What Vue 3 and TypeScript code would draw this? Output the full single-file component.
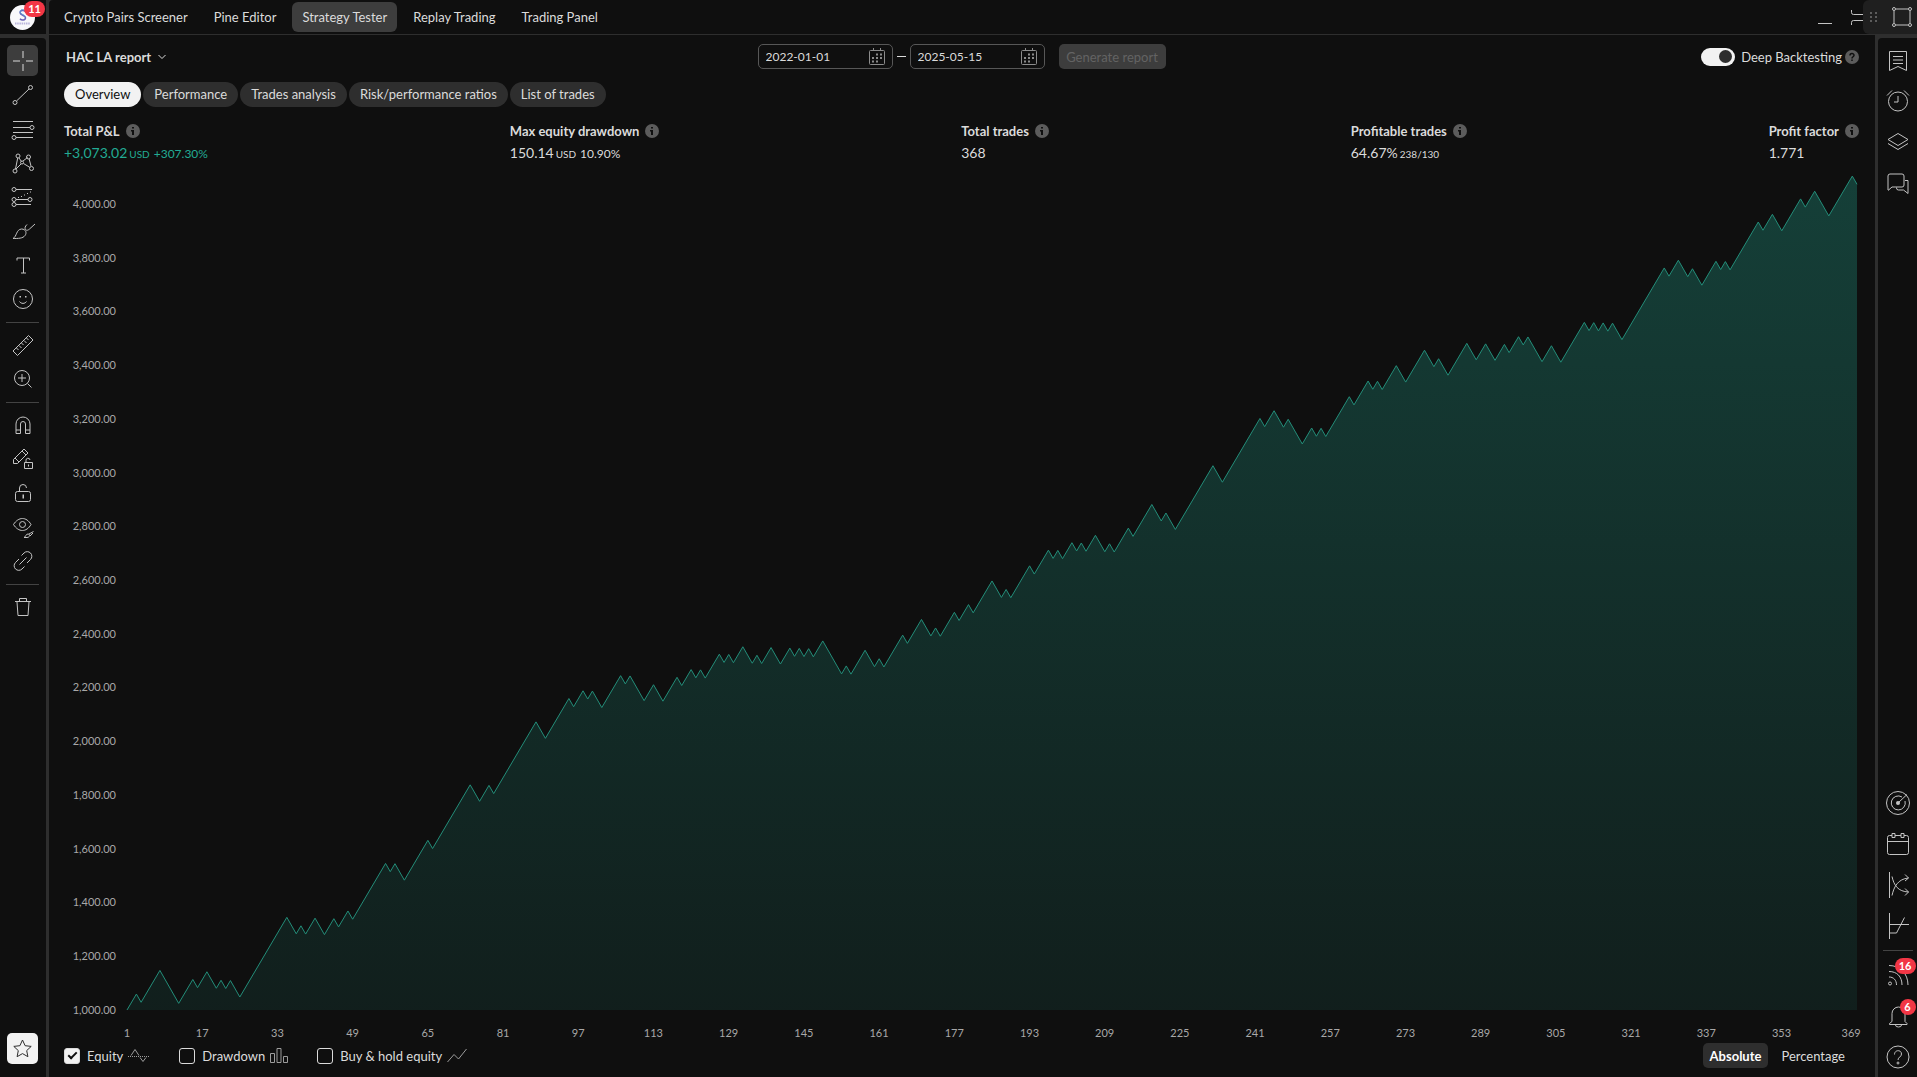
<script setup lang="ts">
import { ref } from 'vue'

interface Icon {
  name: string
  paths: string
  dots?: [number, number, number][]
  fills?: string
  badge?: string
}

const panelTabs = ['Crypto Pairs Screener', 'Pine Editor', 'Strategy Tester', 'Replay Trading', 'Trading Panel']
const activePanel = ref('Strategy Tester')

const reportTabs = ['Overview', 'Performance', 'Trades analysis', 'Risk/performance ratios', 'List of trades']
const activeReport = ref('Overview')

const dateFrom = ref('2022-01-01')
const dateTo = ref('2025-05-15')
const deepBacktesting = ref(true)
const showEquity = ref(true)
const showDrawdown = ref(false)
const showHold = ref(false)
const scale = ref('Absolute')

const stats = [
  { label: 'Total P&L', value: '+3,073.02', unit: 'USD', extra: '+307.30%', gain: true },
  { label: 'Max equity drawdown', value: '150.14', unit: 'USD', extra: '10.90%', gain: false },
  { label: 'Total trades', value: '368', unit: '', extra: '', gain: false },
  { label: 'Profitable trades', value: '64.67%', unit: '238/130', extra: '', gain: false },
  { label: 'Profit factor', value: '1.771', unit: '', extra: '', gain: false },
]

// Trade numbers at which a winning streak turns into a losing one and back.
const turns = [
  2, 3, 7, 11, 14, 15, 17, 19, 20, 21, 22, 24, 34, 36, 37, 38, 40, 42, 44, 45, 47, 48, 55, 56, 57, 59, 64, 65,
  73, 75, 77, 78, 87, 89, 94, 95, 97, 98, 99, 101, 105, 106, 107, 110, 112, 114, 117, 118, 120, 121, 122, 123,
  126, 127, 128, 129, 131, 133, 134, 135, 137, 139, 141, 142, 143, 144, 145, 146, 148, 152, 153, 154, 157, 159,
  160, 161, 165, 166, 169, 171, 172, 173, 176, 177, 179, 180, 184, 186, 187, 188, 192, 193, 196, 197, 198, 199,
  201, 202, 203, 204, 206, 208, 209, 210, 213, 214, 218, 220, 221, 223, 231, 233, 241, 242, 244, 246, 247, 250,
  252, 253, 254, 255, 260, 261, 264, 265, 266, 267, 270, 272, 276, 278, 279, 281, 285, 287, 289, 291, 293, 294,
  296, 297, 298, 301, 303, 305, 310, 311, 312, 313, 314, 315, 316, 318, 327, 328, 330, 332, 333, 335, 338, 339,
  340, 341, 347, 348, 350, 352, 356, 357, 359, 362, 367, 368,
]
const averageWin = 29.66
const averageLoss = 30.66

const points: string[] = ['0,3000']
let equity = 1000
let last = 0
turns.forEach((turn, i) => {
  equity += (turn - last) * (i % 2 === 0 ? averageWin : -averageLoss)
  last = turn
  points.push(`${turn},${(4000 - equity).toFixed(1)}`)
})
const linePoints = points.join(' ')
const areaPoints = `${linePoints} 368,3000`

const yLabels = Array.from({ length: 16 }, (_, i) => (4000 - i * 200).toLocaleString('en-US') + '.00')
const xLabels = Array.from({ length: 24 }, (_, i) => 1 + i * 16)

const drawTools: Icon[][] = [
  [
    { name: 'Cross', paths: 'M14 4v7M14 17v7M4 14h7M17 14h7' },
    { name: 'Trend line', paths: 'M7.5 20 20 8', dots: [[6, 21.5, 2], [21.5, 6.5, 2]] },
    { name: 'Fib retracement', paths: 'M4 6.5h20M4 12.5h17M4 17.5h20M7 22.5h17', dots: [[23, 12.5, 2], [5, 22.5, 2]] },
    { name: 'Patterns', paths: 'M6.5 20 8.7 9M10 9l2.5 3.5M14 12l4.5-3.5M20 9.500l2 7.500M14.500 14.500l6.500 4M12 15l-5 5', dots: [[9, 7, 2], [19.5, 8, 2], [13, 13.500, 1.500], [6, 22, 2], [22.500, 19.500, 2]] },
    { name: 'Forecasting', paths: 'M7 6.5h16M7 16.500h12M7 21.500h15M9 14.500h1M12 13.500h1M15 12h1M18 10.500h1M21 9h1', dots: [[5, 6.5, 2], [5, 16.500, 2], [21, 16.500, 2], [5, 21.500, 2]] },
    { name: 'Brush', paths: 'M4 21.500c4-2 3-9 8.500-9.500 4.500 0 5.500 4 3.500 6.500-2 3-7 3-12 3ZM18 7.500c-2 2-2.500 3.500-1.500 5s3 .5 4-.5L26 7' },
    { name: 'Text', paths: 'M8 9.500v-2.500h12.500v2.500M14.500 7v15M12 22h5' },
    { name: 'Icons', paths: 'M10.500 16.500c1.500 2.500 5.500 2.500 7 0', dots: [[14, 14, 9.5]], fills: 'M10.500 11h1.500v1.500h-1.500zM16 11h1.500v1.500h-1.500z' },
  ],
  [
    { name: 'Measure', paths: 'M4 20 19.500 4.500 24 9 8.500 24.500ZM7.500 17l2 2M10 14.500l2.500 2.500M12.500 12l2 2M15 9.500l2.500 2.500M17.500 7l2 2' },
    { name: 'Zoom in', paths: 'M18.500 18.500l4 4M9 13h8M13 9v8', dots: [[13, 13, 7.5]] },
  ],
  [
    { name: 'Magnet', paths: 'M7 22.500V13a7 7 0 0 1 14 0v9.500h-4.500V13a2.500 2.500 0 0 0-5 0v9.500ZM7 19h4.500M16.500 19H21' },
    { name: 'Stay in drawing mode', paths: 'M4.500 18.500v-4L15 4l4 4L8.500 18.500ZM13 6l4 4M6 13l4 4M15.500 17.500h8v6h-8ZM17 17.500v-2a2 2 0 0 1 4-.5', fills: 'M19 19.500h1v2h-1z' },
    { name: 'Lock drawings', paths: 'M8.500 12.500h11a2 2 0 0 1 2 2v6a2 2 0 0 1-2 2h-11a2 2 0 0 1-2-2v-6a2 2 0 0 1 2-2ZM10.500 12V9a3.500 3.500 0 0 1 7 0', fills: 'M13.500 15.500h1.500v4h-1.500z' },
    { name: 'Hide drawings', paths: 'M4.500 11.500c5-8 13-8 17.500 0-4.500 8-12.500 8-17.500 0ZM15 24.500c2-.5 1.500-3.500 4-3.500s2 3.500-1 3.500ZM20 21l4.500-2.500M21 23l3-3', dots: [[13.500, 11.500, 3]] },
    { name: 'Link', paths: 'M12.500 8.500l2.500-2.500a4.500 4.500 0 0 1 6.500 6.500L18 16M15.500 19.500 13 22a4.500 4.500 0 0 1-6.500-6.500L10 12M10.500 17.500l7-7' },
  ],
  [{ name: 'Remove', paths: 'M6 8.500h16M10.500 8V5.500h7V8M8 9l1 13.500h10L20 9' }],
]

const widgetsTop: Icon[] = [
  { name: 'Watchlist', paths: 'M5.500 4.500h17v19l-8.500-4-8.500 4ZM9 9.500h10M9 13h10M9 16.500h10' },
  { name: 'Alerts', paths: 'M14 8v6h-4M3 7.500 8 2.500M20 2.500l5 5', dots: [[14, 13.500, 9.5]] },
  { name: 'Object tree', paths: 'M14 4.500 24 10.500 14 16.500 4 10.500ZM4 14.500l10 6 10-6' },
  { name: 'Chats', paths: 'M4 20V6a2 2 0 0 1 2-2h12a2 2 0 0 1 2 2v9a2 2 0 0 1-2 2H8l-4 3.500M12.500 17.500V18a2 2 0 0 0 2 2h5l4.500 3.500V10.500h-3' },
]
const widgetsMiddle: Icon[] = [
  { name: 'Screeners', paths: 'M14 14 23 5.500M18 8a7 7 0 1 0 3 4', dots: [[14, 14, 11.5]], fills: 'M12 14a2 2 0 1 0 4 0 2 2 0 1 0-4 0' },
  { name: 'Calendar', paths: 'M8 5.500H5.500a2 2 0 0 0-2 2v15a2 2 0 0 0 2 2h17a2 2 0 0 0 2-2v-15a2 2 0 0 0-2-2H20M11 5.500h6M3.500 11.500h21M8 3.500h3v4H8ZM17 3.500h3v4h-3Z' },
  { name: 'Options', paths: 'M5.500 1v26M8 5.500c2 9 6 15 16.500 15.500M8 24.500c2-9 6-16.500 16.500-17.500M21 3.500 24.500 7 21 10M21 17.500l3.500 3.500-3.500 3.500' },
  { name: 'Strategy builder', paths: 'M5.500 1v26M5.500 12.500H25M5.500 21h7L20.500 5.500' },
]
const widgetsBottom: Icon[] = [
  { name: 'News', paths: 'M5 4.500c11 0 19 8 19 19.500M5 10.500c8 0 13 5 13 13.500M5 16c4.500 0 7.500 3 7.500 8', dots: [[6, 22.500, 1.5]], badge: '16' },
  { name: 'Notifications', paths: 'M8 19.500v-8a6.500 6.500 0 0 1 13 0v8l2 2v1H5.500v-1ZM11.500 23a3 2 0 0 0 6 0', badge: '6' },
  { name: 'Help', paths: 'M10.500 11.500c0-5 7-5 7-.5 0 3-3.500 3-3.500 6', dots: [[14, 14, 11], [14, 20, 1]] },
]
const widgetGroups = [widgetsTop, widgetsMiddle, widgetsBottom]
</script>

<template>
  <div class="app">
    <aside class="left">
      <div class="account">
        <button class="logo" aria-label="Account">
          <svg width="25" height="25" viewBox="0 0 25 25">
            <circle cx="12.500" cy="12.500" r="12.500" fill="#f8f8fb" />
            <path d="M15.500 6.500c-2-2-5.500-1-5.500 1.200 0 2.500 5.500 2.500 5.500 5 0 2.800-4 3-5.500 1" fill="none" stroke="#6a63b8" stroke-width="1.500" />
            <path d="M14 5c-2-1-4 0-4 2s5.500 3 5.500 5" fill="none" stroke="#5f9ed4" stroke-width="1" />
            <path d="M5 18.500h15" stroke="#b9b5dc" stroke-width="2" stroke-dasharray="1.500 .7" />
          </svg>
          <span class="badge">11</span>
        </button>
      </div>
      <nav class="tools" aria-label="Drawing tools">
        <div v-for="(group, g) in drawTools" :key="g" class="group">
          <button v-for="(tool, t) in group" :key="tool.name" class="tool" :class="{ on: g === 0 && t === 0 }" :aria-label="tool.name">
            <svg class="icon" viewBox="0 0 28 28">
              <path :d="tool.paths" />
              <circle v-for="(d, i) in tool.dots" :key="i" :cx="d[0]" :cy="d[1]" :r="d[2]" />
              <path v-if="tool.fills" class="solid" :d="tool.fills" />
            </svg>
          </button>
        </div>
        <button class="star" aria-label="Favorites">
          <svg width="21" height="21" viewBox="0 0 21 21">
            <path d="M10.500 2l2.600 5.700 6.100.7-4.500 4.200 1.200 6.100-5.400-3.100-5.400 3.100 1.200-6.100L1.800 8.400l6.100-.7Z" fill="none" stroke="#2e2e2e" />
          </svg>
        </button>
      </nav>
    </aside>

    <main class="main">
      <header class="panel-tabs">
        <nav class="tabs">
          <button v-for="tab in panelTabs" :key="tab" class="tab" :class="{ active: tab === activePanel }" @click="activePanel = tab">{{ tab }}</button>
        </nav>
        <button class="window" aria-label="Minimize panel">
          <svg width="28" height="28" viewBox="0 0 28 28"><path d="M7 20.500h14" /></svg>
        </button>
        <button class="window" aria-label="Maximize panel">
          <svg width="28" height="28" viewBox="0 0 28 28"><path d="M6.500 7v2.500a2 2 0 0 0 2 2H24M6.500 22v-2.500a2 2 0 0 1 2-2H24" /></svg>
        </button>
      </header>

      <section class="report">
        <div class="controls">
          <button class="report-name">
            HAC LA report
            <svg width="8" height="6" viewBox="0 0 8 6"><path d="M.5 1 4 4.500 7.500 1" fill="none" stroke="currentColor" /></svg>
          </button>
          <div class="range">
            <label class="date">
              <input v-model="dateFrom" type="text" aria-label="From date" />
              <svg width="18" height="18" viewBox="0 0 18 18">
                <path d="M2.500 2.500h13a1 1 0 0 1 1 1v12a1 1 0 0 1-1 1h-13a1 1 0 0 1-1-1v-12a1 1 0 0 1 1-1ZM5.500 0v2.500M12.500 0v2.500" />
                <path d="M8 6.500h2M12 6.500h2M4 10h2M8 10h2M12 10h2M4 13.500h2M8 13.500h2" class="marks" />
              </svg>
            </label>
            <span class="dash"></span>
            <label class="date">
              <input v-model="dateTo" type="text" aria-label="To date" />
              <svg width="18" height="18" viewBox="0 0 18 18">
                <path d="M2.500 2.500h13a1 1 0 0 1 1 1v12a1 1 0 0 1-1 1h-13a1 1 0 0 1-1-1v-12a1 1 0 0 1 1-1ZM5.500 0v2.500M12.500 0v2.500" />
                <path d="M8 6.500h2M12 6.500h2M4 10h2M8 10h2M12 10h2M4 13.500h2M8 13.500h2" class="marks" />
              </svg>
            </label>
            <button class="generate" disabled>Generate report</button>
          </div>
          <div class="deep">
            <label class="deep-label"><input v-model="deepBacktesting" type="checkbox" class="switch" />Deep Backtesting</label>
            <svg class="info" width="14" height="14" viewBox="0 0 14 14">
              <circle cx="7" cy="7" r="7" />
              <path d="M5 5.500c0-2.500 4-2.500 4-.2C9 6.800 7 6.700 7 8.500M7 9.500v1.500" fill="none" stroke="#0f0f0f" stroke-width="1.500" />
            </svg>
          </div>
        </div>

        <nav class="pills">
          <button v-for="tab in reportTabs" :key="tab" class="pill" :class="{ active: tab === activeReport }" @click="activeReport = tab">{{ tab }}</button>
        </nav>

        <div class="stats">
          <div v-for="s in stats" :key="s.label" class="stat">
            <div class="stat-label">
              {{ s.label }}
              <svg class="info" width="14" height="14" viewBox="0 0 14 14">
                <circle cx="7" cy="7" r="7" />
                <path d="M6 3h2v1.500H6zM5 6h3v5H6V7.500H5z" fill="#0f0f0f" />
              </svg>
            </div>
            <div class="stat-value" :class="{ gain: s.gain }">
              <span>{{ s.value }}</span><small v-if="s.unit">{{ s.unit }}</small><span v-if="s.extra" class="extra">{{ s.extra }}</span>
            </div>
          </div>
        </div>

        <div class="chart">
          <div class="y-axis"><span v-for="y in yLabels" :key="y">{{ y }}</span></div>
          <svg class="plot" viewBox="0 0 368 3000" preserveAspectRatio="none" role="img" aria-label="Equity">
            <defs>
              <linearGradient id="equity-fill" x1="0" y1="0" x2="0" y2="1">
                <stop offset="0" stop-color="#22ab94" stop-opacity=".31" />
                <stop offset="1" stop-color="#22ab94" stop-opacity=".1" />
              </linearGradient>
            </defs>
            <polygon :points="areaPoints" fill="url(#equity-fill)" />
            <polyline :points="linePoints" fill="none" stroke="#238d79" stroke-width="1" vector-effect="non-scaling-stroke" />
          </svg>
          <div class="x-axis"><span v-for="x in xLabels" :key="x">{{ x }}</span></div>
        </div>

        <footer class="legend">
          <label class="series">
            <input v-model="showEquity" type="checkbox" class="check" />Equity
            <svg width="22" height="16" viewBox="0 0 22 16"><path d="M3 7.500 7 1.500 11 7.500M12 9.500l3 4 3-4" /><path d="M0 8.500h22" stroke-dasharray="1 1" /></svg>
          </label>
          <label class="series">
            <input v-model="showDrawdown" type="checkbox" class="check" />Drawdown
            <svg width="18" height="16" viewBox="0 0 18 16"><path d="M.5 5.500h4v9h-4ZM7 .5h4v14H7ZM13.500 8.500h4v6h-4Z" /></svg>
          </label>
          <label class="series">
            <input v-model="showHold" type="checkbox" class="check" />Buy &amp; hold equity
            <svg width="20" height="16" viewBox="0 0 20 16"><path d="M.5 14 7 6.500l4.500 4.500 8-10" /></svg>
          </label>
          <div class="scale">
            <button v-for="m in ['Absolute', 'Percentage']" :key="m" :class="{ active: m === scale }" @click="scale = m">{{ m }}</button>
          </div>
        </footer>
      </section>
    </main>

    <aside class="right">
      <nav class="widgets" aria-label="Widgets">
        <div v-for="(group, g) in widgetGroups" :key="g" class="widget-group">
          <button v-for="w in group" :key="w.name" class="widget" :aria-label="w.name">
            <svg class="icon" viewBox="0 0 28 28">
              <path :d="w.paths" />
              <circle v-for="(d, i) in w.dots" :key="i" :cx="d[0]" :cy="d[1]" :r="d[2]" />
              <path v-if="w.fills" class="solid" :d="w.fills" />
            </svg>
            <span v-if="w.badge" class="badge">{{ w.badge }}</span>
          </button>
        </div>
      </nav>
    </aside>

    <div class="floating">
      <svg width="7" height="10" viewBox="0 0 7 10"><path d="M0 1h2M5 1h2M0 5h2M5 5h2M0 9h2M5 9h2" stroke="#5c5c5c" stroke-width="2" /></svg>
      <button aria-label="Rectangle">
        <svg class="icon" viewBox="0 0 28 28">
          <path d="M8 6h12M8 22h12M6 8v12M22 8v12" />
          <circle cx="6" cy="6" r="1.500" /><circle cx="22" cy="6" r="1.500" /><circle cx="6" cy="22" r="1.500" /><circle cx="22" cy="22" r="1.500" />
        </svg>
      </button>
    </div>
  </div>
</template>

<style>
body {
  margin: 0;
  background: #0f0f0f;
}
</style>

<style scoped>
.app {
  position: relative;
  display: flex;
  height: 100vh;
  overflow: hidden;
  background: #2e2e2e;
  color: #dbdbdb;
  font-family: Lato, 'Open Sans', sans-serif;
  font-size: 13px;
  line-height: 16px;
}
button,
input {
  margin: 0;
  padding: 0;
  border: 0;
  background: none;
  color: inherit;
  font: inherit;
}
svg {
  display: block;
  flex: none;
}
.icon {
  width: 28px;
  height: 28px;
  fill: none;
  stroke: #c4c4c4;
}
.icon .solid {
  fill: #c4c4c4;
  stroke: none;
}
.badge {
  position: absolute;
  min-width: 8px;
  padding: 0 4px;
  border-radius: 8px;
  background: #f23645;
  color: #fff;
  font-size: 11px;
  font-weight: 700;
  text-align: center;
}

.left {
  display: flex;
  flex: none;
  flex-direction: column;
  gap: 4px;
  width: 46px;
  margin-right: 3px;
}
.account {
  box-sizing: border-box;
  height: 34px;
  padding: 5px 0 0 10px;
  background: #0f0f0f;
}
.logo {
  position: relative;
  display: block;
}
.logo .badge {
  top: -4px;
  right: -10px;
}
.tools {
  display: flex;
  flex: 1;
  flex-direction: column;
  align-items: center;
  padding: 7px 1px 0 0;
  border-top-right-radius: 4px;
  background: #0f0f0f;
}
.group {
  display: flex;
  flex-direction: column;
  align-items: center;
  width: 33px;
}
.group + .group {
  margin-top: 5px;
  padding-top: 6px;
  border-top: 1px solid #434343;
}
.tool {
  display: grid;
  place-items: center;
  width: 31px;
  height: 31px;
  margin-bottom: 3px;
  border-radius: 5px;
}
.tool.on {
  background: #3d3d3d;
}
.tool.on .icon {
  stroke: #8c8c8c;
  stroke-width: 2;
}
.star {
  display: grid;
  place-items: center;
  width: 31px;
  height: 31px;
  margin: auto 0 13px;
  border-radius: 5px;
  background: #f2f2f2;
}

.main {
  display: flex;
  flex: 1;
  flex-direction: column;
  min-width: 0;
  border-top-left-radius: 4px;
  background: #0f0f0f;
}
.panel-tabs {
  display: flex;
  flex: none;
  align-items: center;
  height: 34px;
  padding: 0 2px 0 5px;
  border-bottom: 1px solid #2e2e2e;
}
.tabs {
  display: flex;
  flex: 1;
  gap: 6px;
}
.tab {
  height: 30px;
  padding: 0 10px 1px;
  border-radius: 6px;
}
.tab.active {
  background: #3d3d3d;
}
.window {
  margin-right: 6px;
}
.window + .window {
  margin-right: 0;
}
.window svg {
  fill: none;
  stroke: #c4c4c4;
}

.report {
  display: flex;
  flex: 1;
  flex-direction: column;
  min-height: 0;
  padding: 9px 16px 9px 15px;
}
.controls {
  display: grid;
  grid-template-columns: 1fr auto 1fr;
  align-items: center;
  height: 25px;
}
.report-name {
  display: flex;
  align-items: center;
  gap: 7px;
  padding-left: 2px;
  font-weight: 700;
}
.range {
  display: flex;
  align-items: center;
}
.date {
  box-sizing: border-box;
  display: flex;
  align-items: center;
  width: 135px;
  height: 25px;
  padding: 0 6px 0 7px;
  border: 1px solid #575757;
  border-radius: 5px;
}
.date input {
  flex: 1;
  min-width: 0;
  outline: 0;
  font-size: 12px;
}
.date svg {
  fill: none;
  stroke: #8c8c8c;
}
.date .marks {
  stroke-width: 2;
}
.dash {
  width: 9px;
  height: 1px;
  margin: 0 4px;
  background: #dbdbdb;
}
.generate {
  width: 107px;
  height: 25px;
  margin-left: 14px;
  border-radius: 5px;
  background: #3d3d3d;
  color: #636363;
}
.deep {
  display: flex;
  gap: 3px;
  align-items: center;
  justify-content: flex-end;
}
.deep-label {
  display: flex;
  gap: 6px;
  align-items: center;
}
.switch {
  appearance: none;
  display: flex;
  align-items: center;
  width: 34px;
  height: 18px;
  padding: 0 3px;
  border-radius: 9px;
  background: #575757;
}
.switch:checked {
  justify-content: flex-end;
  background: #f2f2f2;
}
.switch::before {
  content: '';
  width: 13px;
  height: 13px;
  border-radius: 50%;
  background: #2e2e2e;
}
.info {
  fill: #5c5c5c;
}

.pills {
  display: flex;
  gap: 2px;
  margin-top: 13px;
}
.pill {
  height: 25px;
  padding: 0 11px 2px;
  border-radius: 13px;
  background: #2e2e2e;
}
.pill.active {
  background: #f2f2f2;
  color: #0f0f0f;
}

.stats {
  display: flex;
  justify-content: space-between;
  margin-top: 16px;
}
.stat-label {
  display: flex;
  gap: 6px;
  align-items: center;
  font-weight: 700;
}
.stat-value {
  display: flex;
  gap: 2px;
  align-items: baseline;
  margin-top: 6px;
  font-size: 14px;
}
.stat-value small {
  font-size: 10px;
}
.stat-value .extra {
  margin-left: 2px;
  font-size: 12px;
}
.gain {
  color: #22ab94;
}

.chart {
  display: grid;
  flex: 1;
  grid-template-rows: minmax(0, 1fr) auto;
  grid-template-columns: 52px 1fr;
  column-gap: 11px;
  min-height: 0;
  margin: 42px 2px 0 0;
  color: #a8a8a8;
  font-size: 11px;
}
.y-axis {
  display: flex;
  flex-direction: column;
  justify-content: space-between;
  margin: -8px 0;
  text-align: right;
}
.plot {
  width: 100%;
  height: 100%;
  min-height: 0;
  overflow: visible;
}
.x-axis {
  display: flex;
  grid-column: 2;
  justify-content: space-between;
  margin-top: 15px;
}
.x-axis span {
  display: flex;
  justify-content: center;
  width: 0;
}
.x-axis span:last-child {
  justify-content: flex-end;
  width: 4px;
  margin-right: -4px;
}

.legend {
  display: flex;
  align-items: center;
  height: 25px;
  margin-top: 2px;
}
.series {
  display: flex;
  align-items: center;
  margin-right: 29px;
}
.series svg {
  margin-left: 5px;
  fill: none;
  stroke: #9c9c9c;
}
.check {
  appearance: none;
  display: grid;
  place-items: center;
  box-sizing: border-box;
  width: 16px;
  height: 16px;
  margin-right: 7px;
  border: 1px solid #dbdbdb;
  border-radius: 3px;
}
.check:checked {
  background: #f2f2f2;
}
.check:checked::before {
  content: '';
  width: 7px;
  height: 3px;
  margin-bottom: 3px;
  border: solid #0f0f0f;
  border-width: 0 0 2px 2px;
  transform: rotate(-45deg);
}
.scale {
  display: flex;
  gap: 6px;
  margin-left: auto;
  padding-right: 7px;
}
.scale button {
  height: 25px;
  padding: 0 7px;
  border-radius: 5px;
}
.scale .active {
  background: #2e2e2e;
  color: #fff;
  font-weight: 700;
}

.right {
  display: flex;
  flex: none;
  box-sizing: border-box;
  width: 42px;
  padding: 38px 0 0 3px;
}
.widgets {
  display: flex;
  flex: 1;
  flex-direction: column;
  align-items: center;
  padding-top: 2px;
  border-top-left-radius: 4px;
  background: #0f0f0f;
}
.widget-group {
  display: flex;
  flex-direction: column;
}
.widget-group:nth-child(2) {
  margin-top: auto;
  padding-bottom: 4px;
}
.widget-group:nth-child(3) {
  padding-top: 3px;
  border-top: 1px solid #434343;
}
.widget {
  position: relative;
  display: grid;
  place-items: center;
  width: 30px;
  height: 41px;
}
.widget .badge {
  top: 4px;
  right: -3px;
}

.floating {
  position: absolute;
  top: 0;
  right: 0;
  box-sizing: border-box;
  display: flex;
  align-items: center;
  justify-content: space-between;
  width: 54px;
  height: 34px;
  padding: 0 1px 0 7px;
  border-radius: 6px 0 0 6px;
  background: #1f1f1f;
}
</style>
